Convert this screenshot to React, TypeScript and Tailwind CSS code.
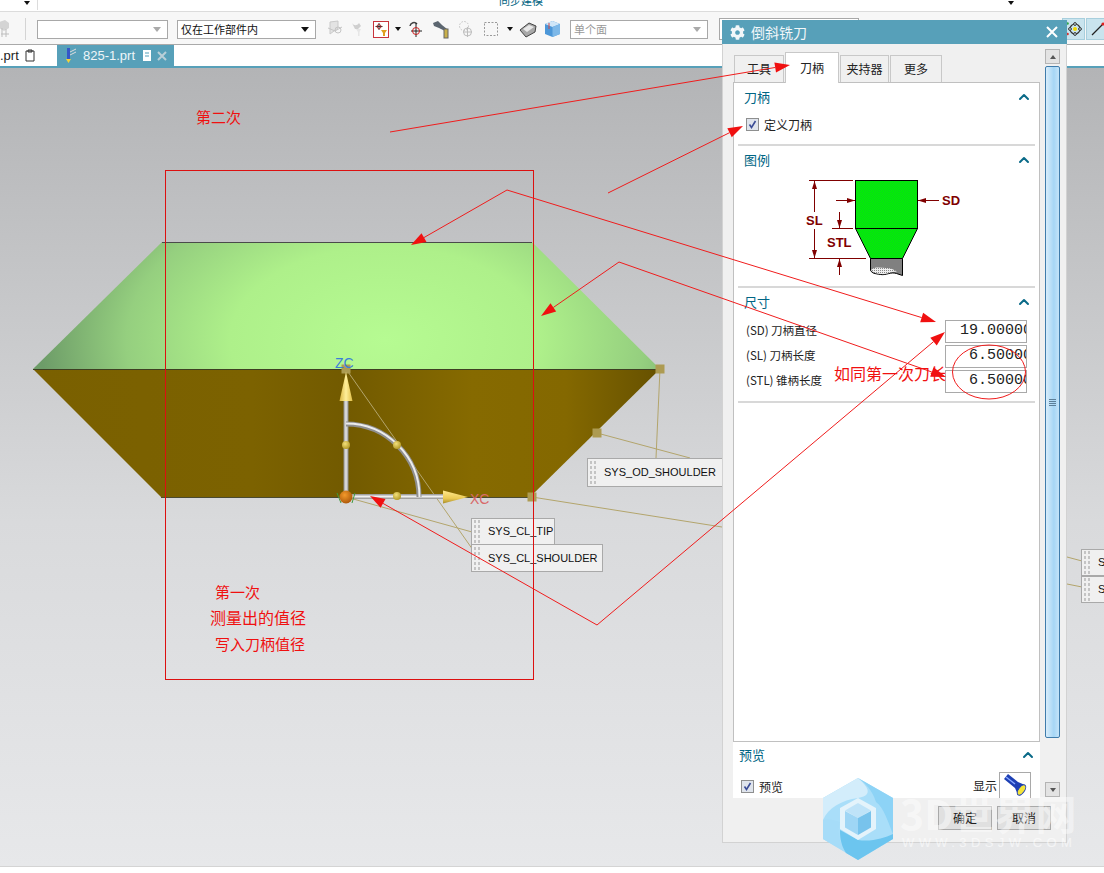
import { ChevronUp } from "lucide-react";
import { FaCog } from "react-icons/fa";

const sans = "font-['Liberation_Sans','Noto_Sans_CJK_SC',sans-serif]";
const cjk = "font-['Noto_Sans_CJK_SC','Noto_Sans',sans-serif]";

function Arrow({ x1, y1, x2, y2 }: { x1: number; y1: number; x2: number; y2: number }) {
    const a = Math.atan2(y2 - y1, x2 - x1);
    const len = 15;
    const w = 5;
    const bx = x2 - Math.cos(a) * len;
    const by = y2 - Math.sin(a) * len;
    const nx = -Math.sin(a) * w;
    const ny = Math.cos(a) * w;
    return (
        <g>
            <line x1={x1} y1={y1} x2={bx} y2={by} stroke="#f01c1c" strokeWidth="1" />
            <polygon points={`${x2},${y2} ${bx + nx},${by + ny} ${bx - nx},${by - ny}`} fill="#f01010" />
        </g>
    );
}

function Handle({ x, y }: { x: number; y: number }) {
    return <rect x={x - 4.5} y={y - 4.5} width="9" height="9" fill="#ad9b52" />;
}

function Model() {
    return (
        <svg className="absolute left-0 top-0" width="1104" height="873" viewBox="0 0 1104 873">
            <defs>
                <radialGradient id="green" gradientUnits="userSpaceOnUse" cx="385" cy="340" r="345" gradientTransform="translate(385 340) scale(1 .6) translate(-385 -340)">
                    <stop offset="0" stopColor="#b6fb92" />
                    <stop offset="0.45" stopColor="#aef08a" />
                    <stop offset="0.75" stopColor="#95cf7f" />
                    <stop offset="1" stopColor="#6d9c68" />
                </radialGradient>
                <linearGradient id="brown" gradientUnits="userSpaceOnUse" x1="33" y1="0" x2="660" y2="0">
                    <stop offset="0" stopColor="#7a6000" />
                    <stop offset="0.35" stopColor="#7c6200" />
                    <stop offset="0.5" stopColor="#725a00" />
                    <stop offset="0.7" stopColor="#866a00" />
                    <stop offset="0.85" stopColor="#846800" />
                    <stop offset="1" stopColor="#665100" />
                </linearGradient>
                <linearGradient id="shaft" x1="0" y1="0" x2="1" y2="0">
                    <stop offset="0" stopColor="#8e8e8e" />
                    <stop offset="0.5" stopColor="#e8e8e8" />
                    <stop offset="1" stopColor="#8e8e8e" />
                </linearGradient>
                <linearGradient id="shaftH" x1="0" y1="0" x2="0" y2="1">
                    <stop offset="0" stopColor="#8e8e8e" />
                    <stop offset="0.5" stopColor="#f0f0f0" />
                    <stop offset="1" stopColor="#8e8e8e" />
                </linearGradient>
                <linearGradient id="coneV" x1="0" y1="0" x2="1" y2="0">
                    <stop offset="0" stopColor="#d9b640" />
                    <stop offset="0.5" stopColor="#ffef9a" />
                    <stop offset="1" stopColor="#e0bd45" />
                </linearGradient>
                <linearGradient id="coneH" x1="0" y1="0" x2="0" y2="1">
                    <stop offset="0" stopColor="#ffe98e" />
                    <stop offset="0.6" stopColor="#eccb54" />
                    <stop offset="1" stopColor="#a88d2c" />
                </linearGradient>
                <radialGradient id="ball" cx="0.4" cy="0.35" r="0.7">
                    <stop offset="0" stopColor="#f3e07a" />
                    <stop offset="1" stopColor="#b09622" />
                </radialGradient>
                <radialGradient id="orange" cx="0.4" cy="0.35" r="0.7">
                    <stop offset="0" stopColor="#f49a2a" />
                    <stop offset="1" stopColor="#a95508" />
                </radialGradient>
            </defs>

            <polygon points="33,369 162,242 532,242 660,369" fill="url(#green)" />
            <polygon points="33,369 660,369 530,497 161,497" fill="url(#brown)" />
            <line x1="162" y1="242.5" x2="532" y2="242.5" stroke="#4a4a4a" />
            <line x1="33" y1="369.5" x2="660" y2="369.5" stroke="#3f3f22" />
            <line x1="161" y1="497.5" x2="530" y2="497.5" stroke="#4a4a30" />

            <g stroke="#b3a56c" strokeWidth="1" fill="none">
                <line x1="346" y1="369" x2="473" y2="550" />
                <line x1="346" y1="497" x2="472" y2="532" />
                <line x1="660" y1="369" x2="656" y2="458" />
                <line x1="597" y1="433" x2="690" y2="458" />
                <line x1="532" y1="497" x2="722" y2="527" />
                <line x1="1067" y1="557" x2="1082" y2="561" />
                <line x1="1067" y1="584" x2="1082" y2="587" />
            </g>
            <Handle x={346} y={369} />
            <Handle x={660} y={369} />
            <Handle x={597} y={433} />
            <Handle x={532} y={497} />

            <rect x="343.5" y="400" width="5" height="97" fill="url(#shaft)" />
            <rect x="346" y="494" width="100" height="5" fill="url(#shaftH)" />
            <polygon points="346,372 339.5,401 352.5,401" fill="url(#coneV)" />
            <polygon points="468,497 443,490.5 443,503.5" fill="url(#coneH)" />
            <path d="M346 424 A73 73 0 0 1 419 497" fill="none" stroke="#8f8f8f" strokeWidth="5" />
            <path d="M346 423.5 A73.5 73.5 0 0 1 419.5 497" fill="none" stroke="#ececec" strokeWidth="2" />
            <circle cx="346" cy="445" r="4" fill="url(#ball)" />
            <circle cx="397" cy="445" r="4" fill="url(#ball)" />
            <circle cx="397" cy="496" r="4" fill="url(#ball)" />
            <path d="M337 493 l4 10 M355 493 l-3 10" stroke="#3f9a3f" strokeWidth="1" fill="none" />
            <circle cx="346" cy="497" r="6.5" fill="url(#orange)" />
        </svg>
    );
}

// red notes drawn by hand on top of the screenshot
function Annotations() {
    return (
        <svg className="absolute left-0 top-0 pointer-events-none" width="1104" height="873" viewBox="0 0 1104 873">
            <rect x="165.5" y="170.5" width="368" height="509" fill="none" stroke="#dc1010" strokeWidth="1" />
            <Arrow x1={390} y1={132} x2={790} y2={65} />
            <Arrow x1={608} y1={193} x2={743} y2={126} />
            <Arrow x1={507} y1={190} x2={411} y2={245} />
            <Arrow x1={507} y1={190} x2={936} y2={322} />
            <Arrow x1={619} y1={262} x2={541} y2={316} />
            <Arrow x1={619} y1={262} x2={946} y2={377} />
            <Arrow x1={597} y1={625} x2={945} y2={332} />
            <Arrow x1={597} y1={625} x2={370} y2={496} />
            <ellipse cx="989" cy="372" rx="36.5" ry="27" fill="none" stroke="#f01c1c" strokeWidth="1" />
        </svg>
    );
}

function Grip() {
    return <div className="w-[8px] h-[25px] ml-[1px] mr-[7px] shrink-0 bg-[radial-gradient(#c4c4c4_1.3px,transparent_1.4px)] bg-[length:4px_5px]" />;
}

function SysLabel({ text, className }: { text: string; className: string }) {
    return (
        <div className={`absolute flex items-center bg-[#f0f0f0] border border-[#a9a9a9] text-[11px] text-[#111] ${sans} ${className}`}>
            <Grip />
            <span className="whitespace-nowrap">{text}</span>
        </div>
    );
}

function ToolIcon({ kind }: { kind: string }) {
    if (kind === "filter") {
        return (
            <svg width="16" height="17" viewBox="0 0 16 17">
                <rect x="0.5" y="0.5" width="15" height="16" fill="#fff" stroke="#c8343c" />
                <path d="M6 2v7M2.5 5.500h7" stroke="#333" />
                <circle cx="6" cy="5.500" r="2" fill="none" stroke="#b03030" />
                <path d="M8 9h6l-2 3v3h-2v-3z" fill="#e0a020" />
            </svg>
        );
    }
    if (kind === "snap") {
        return (
            <svg width="16" height="19" viewBox="0 0 16 19">
                <path d="M2 6 A4 4 0 0 1 9 4" fill="none" stroke="#444" strokeWidth="1.5" />
                <path d="M8 3v14M3 11h11" stroke="#222" />
                <circle cx="8" cy="11" r="3.5" fill="none" stroke="#cc2222" />
            </svg>
        );
    }
    if (kind === "wrench") {
        return (
            <svg width="18" height="19" viewBox="0 0 18 19">
                <path d="M1 3l5-2 4 4 5 4-2 2-6-3-5-2z" fill="#5c6670" />
                <rect x="12" y="9" width="4" height="9" fill="#c9b04a" stroke="#666" />
            </svg>
        );
    }
    if (kind === "dim1") {
        return (
            <svg width="16" height="20" viewBox="0 0 16 20">
                <path d="M3 3l8-1v7l-8 6z" fill="#e3e3e3" stroke="#c9c9c9" />
                <path d="M1 9l7 3 7-4" stroke="#c5c5c5" fill="none" />
                <circle cx="11" cy="11" r="3" fill="none" stroke="#c5c5c5" />
            </svg>
        );
    }
    if (kind === "dim2") {
        return (
            <svg width="16" height="18" viewBox="0 0 16 18">
                <path d="M2 3c2 3 5 3 7 0l2 3-3 3H5z" fill="#cfcfcf" />
                <path d="M6 9h5l-1.500 3v4H8v-4z" fill="#e6e6e6" />
            </svg>
        );
    }
    if (kind === "dim3") {
        return (
            <svg width="16" height="19" viewBox="0 0 16 19">
                <circle cx="6" cy="6" r="4.500" fill="none" stroke="#c2c2c2" strokeDasharray="1.5 1.5" />
                <circle cx="9.500" cy="12" r="4" fill="none" stroke="#bdbdbd" />
                <path d="M9.500 7v10M5 12h9" stroke="#bdbdbd" />
            </svg>
        );
    }
    if (kind === "select") {
        return (
            <svg width="16" height="16" viewBox="0 0 16 16">
                <rect x="1.500" y="1.500" width="13" height="13" fill="none" stroke="#999" strokeDasharray="2 1.5" />
            </svg>
        );
    }
    if (kind === "book") {
        return (
            <svg width="18" height="17" viewBox="0 0 18 17">
                <path d="M1 9l9-7 7 3-1 6-9 5z" fill="#a8a8a8" stroke="#444" />
                <path d="M4 8l6-4 5 2-7 5z" fill="#e8e8e8" />
            </svg>
        );
    }
    if (kind === "cube") {
        return (
            <svg width="17" height="18" viewBox="0 0 17 18">
                <path d="M1 4l7.500-3L16 4v10l-7.500 3L1 14z" fill="#4c97d8" />
                <path d="M1 4l7.500 3L16 4l-7.500-3z" fill="#cfe6f8" />
                <path d="M8.500 7v10L16 14V4z" fill="#7db8e8" />
                <path d="M5 3v6" stroke="#d04848" />
            </svg>
        );
    }
    return (
        <svg width="13" height="20" viewBox="0 0 13 20">
            <path d="M1 3l6-2 4 3v5l-5 3-5-3z" fill="#d4d4d4" />
            <path d="M4 9v9M8 10v8M3 15h8" stroke="#bdbdbd" />
        </svg>
    );
}

function Caret({ className = "" }: { className?: string }) {
    return <span className={`w-0 h-0 border-x-[3px] border-x-transparent border-t-[4px] border-t-[#111] ${className}`} />;
}

function Combo({ text, width, disabled }: { text?: string; width: string; disabled?: boolean }) {
    return (
        <div className={`flex items-center h-[19px] shrink-0 border border-[#a8a8a8] bg-white px-[3px] text-[11px] ${cjk} ${width} ${disabled ? "text-[#999]" : "text-[#111]"}`}>
            <span className="flex-1 whitespace-nowrap">{text}</span>
            <span className={`w-0 h-0 mr-[3px] border-x-[4px] border-x-transparent border-t-[5px] ${text && !disabled ? "border-t-[#111]" : "border-t-[#aaa]"}`} />
        </div>
    );
}

function Toolbar() {
    return (
        <div className="relative flex items-center h-[33px] shrink-0 bg-[#f7f7f7] border-b border-[#a9a9a9] pt-[4px] pb-[2px]">
            <div className="ml-[-2px] w-[14px] shrink-0">
                <ToolIcon kind="grip" />
            </div>
            <div className="w-px h-[22px] bg-[#d4d4d4] ml-[13px] mr-[11px] shrink-0" />
            <Combo width="w-[131px]" />
            <div className="w-[9px] shrink-0" />
            <Combo width="w-[139px]" text="仅在工作部件内" />
            <div className="flex items-center shrink-0 ml-[11px]">
                <ToolIcon kind="dim1" />
                <div className="ml-[7px] flex"><ToolIcon kind="dim2" /></div>
                <div className="ml-[7px] flex"><ToolIcon kind="filter" /></div>
                <Caret className="ml-[6px]" />
                <div className="ml-[7px] flex"><ToolIcon kind="snap" /></div>
                <div className="ml-[8px] flex"><ToolIcon kind="wrench" /></div>
                <div className="ml-[8px] flex"><ToolIcon kind="dim3" /></div>
                <div className="ml-[9px] flex"><ToolIcon kind="select" /></div>
                <Caret className="ml-[8px]" />
                <div className="ml-[6px] flex"><ToolIcon kind="book" /></div>
                <div className="ml-[7px] flex"><ToolIcon kind="cube" /></div>
            </div>
            <div className="w-[9px] shrink-0" />
            <Combo width="w-[138px]" text="单个面" disabled />
            <div className="w-[140px] h-[22px] ml-[11px] shrink-0 border border-[#a8a8a8] bg-white" />
            <div className="flex-1" />
            <div className="flex items-center shrink-0 h-[22px] gap-px mr-[-5px]">
                <div className="flex items-center justify-center w-[23px] h-[22px] bg-[#c9e4ee] border border-[#a8cfdd]">
                    <svg className="ml-[3px]" width="18" height="18" viewBox="0 0 18 18">
                        <circle cx="9" cy="9" r="5" fill="none" stroke="#333" strokeWidth="1.2" />
                        <circle cx="9" cy="9" r="2" fill="#f2d800" />
                        <circle cx="9" cy="4" r="1.400" fill="#c9e4ee" stroke="#333" />
                        <circle cx="9" cy="14" r="1.400" fill="#c9e4ee" stroke="#333" />
                        <circle cx="4" cy="9" r="1.400" fill="#c9e4ee" stroke="#333" />
                        <circle cx="14" cy="9" r="1.400" fill="#c9e4ee" stroke="#333" />
                        <circle cx="1.500" cy="3.500" r="1.300" fill="#2fa84a" />
                        <circle cx="1.500" cy="14" r="1.300" fill="#d83030" />
                    </svg>
                </div>
                <div className="flex items-center justify-center w-[23px] h-[22px] bg-[#c9e4ee] border border-[#a8cfdd]">
                    <svg width="16" height="16" viewBox="0 0 16 16">
                        <line x1="2" y1="14" x2="13" y2="3" stroke="#222" strokeWidth="1.2" />
                        <circle cx="13" cy="3" r="1.600" fill="#e02020" />
                    </svg>
                </div>
            </div>
        </div>
    );
}

function TabBar() {
    return (
        <div className="flex h-[21px] shrink-0 bg-white">
            <div className={`flex items-center w-[57px] text-[13px] text-[#222] ${sans} overflow-hidden`}>
                <span>.prt</span>
                <svg className="ml-[6px]" width="10" height="13" viewBox="0 0 10 13">
                    <path d="M1 2h8v10H1zM3 1h4v2H3z" fill="#fff" stroke="#333" />
                </svg>
            </div>
            <div className={`flex items-center w-[117px] bg-[#57a0b9] text-[#eef5f8] text-[13px] ${sans}`}>
                <svg className="ml-[6px]" width="14" height="17" viewBox="0 0 14 17">
                    <path d="M4 1h3v11H4z" fill="#3456c8" />
                    <path d="M7 5l6-3M7 8l6-3" stroke="#ddd" />
                    <path d="M3 12h5l-2.500 4z" fill="#f2d23a" />
                </svg>
                <span className="ml-[6px]">825-1.prt</span>
                <svg className="ml-[7px]" width="10" height="13" viewBox="0 0 10 13">
                    <path d="M1 1h8v11H1z" fill="#fff" />
                    <path d="M3 4h4M3 7h4" stroke="#57a0b9" />
                </svg>
                <svg className="ml-[5px]" width="10" height="10" viewBox="0 0 10 10">
                    <path d="M1 1l8 8M9 1L1 9" stroke="#b9cfd8" strokeWidth="2" />
                </svg>
            </div>
        </div>
    );
}

function Checkbox() {
    return (
        <span className="flex items-center justify-center w-[13px] h-[13px] shrink-0 border border-[#8e8f8f] bg-[#dfe4ec]">
            <svg width="9" height="9" viewBox="0 0 9 9">
                <path d="M1.500 4.500l2 3L7.500 1" fill="none" stroke="#3a4c96" strokeWidth="1.6" />
            </svg>
        </span>
    );
}

function SectionHead({ title }: { title: string }) {
    return (
        <div className={`flex items-center justify-between text-[13px] text-[#006584] ${cjk}`}>
            <span>{title}</span>
            <ChevronUp size={16} strokeWidth={3} className="text-[#0a6a88]" />
        </div>
    );
}

function Legend() {
    const dark = "#800000";
    const label = "font-['Liberation_Sans',sans-serif] text-[13px] font-bold";
    return (
        <svg width="170" height="102" viewBox="0 0 170 102" className="block">
            <defs>
                <pattern id="dither" width="2" height="2" patternUnits="userSpaceOnUse">
                    <rect width="2" height="2" fill="#00f800" />
                    <rect width="1" height="1" fill="#0cd41c" />
                    <rect x="1" y="1" width="1" height="1" fill="#0cd41c" />
                </pattern>
                <pattern id="speck" width="2" height="2" patternUnits="userSpaceOnUse">
                    <rect width="2" height="2" fill="#eeeeee" />
                    <rect width="1" height="1" fill="#888888" />
                </pattern>
            </defs>
            <rect x="55.5" y="4.5" width="62" height="48" fill="url(#dither)" stroke="#000" />
            <polygon points="55.5,52.5 117.5,52.5 102.5,82.5 70.5,82.5" fill="url(#dither)" stroke="#000" />
            <path d="M70.500 82.500h32v17l-6-2c-6-2-10 2-16 1s-8-1-10-4z" fill="#808080" stroke="#000" />
            <path d="M71 94c4-4 10-2 15-2s9 2 11 4c-6-1-10 3-16 2s-8-1-10-4z" fill="url(#speck)" />
            <g stroke={dark} strokeWidth="1" fill="none">
                <path d="M9 4.500h44M14.500 5v31M14.500 53v29M9 82.500h57" />
                <path d="M36 24.500h19M118 24.500h21" />
                <path d="M32 52.500h21M39.500 36v16M39.500 83v16" />
            </g>
            <g fill={dark}>
                <path d="M14.500 5l-2.500 8h5zM14.500 82l-2.500-8h5z" />
                <path d="M55 24.500l-8-2.500v5zM118 24.500l8-2.500v5z" />
                <path d="M39.500 52l-2.500-8h5zM39.500 83l-2.500 8h5z" />
            </g>
            <text x="142" y="29" fill={dark} className={label}>SD</text>
            <text x="6" y="49" fill={dark} className={label}>SL</text>
            <text x="27" y="71" fill={dark} className={label}>STL</text>
        </svg>
    );
}

function Dim({ label, value }: { label: string; value: string }) {
    return (
        <div className="flex items-center h-[25px] justify-between px-[8px]">
            <span className={`text-[11.5px] text-[#222] whitespace-nowrap ${cjk}`}>{label}</span>
            <div className="flex items-center justify-end w-[82px] h-[23px] border border-[#a9a9a9] bg-white overflow-hidden">
                <span className="whitespace-nowrap font-['Liberation_Mono',monospace] text-[15px] text-[#222] mr-[-6px]">{value}</span>
            </div>
        </div>
    );
}

function Dialog() {
    const tab = `flex items-center justify-center h-[27px] bg-[#f0f0f0] border border-b-0 border-[#c8c8c8] text-[12px] text-[#222] ${cjk}`;
    return (
        <div className="absolute left-[722px] top-[20px] w-[345px] h-[823px] flex flex-col bg-[#f0f0f0] border-b border-x border-[#d2d2d2]">
            <div className={`flex items-center h-[24px] shrink-0 mx-[-1px] bg-[#57a0b9] text-[#f2f7f9] text-[14px] ${cjk}`}>
                <FaCog size={15} className="ml-[8px] mr-[6px]" />
                <span className="flex-1">倒斜铣刀</span>
                <svg className="mr-[9px]" width="12" height="12" viewBox="0 0 12 12">
                    <path d="M1 1l10 10M11 1L1 11" stroke="#fff" strokeWidth="2" />
                </svg>
            </div>
            <div className="flex flex-1 min-h-0 pl-[10px] pr-[6px]">
                <div className="flex flex-col w-[307px] shrink-0">
                    <div className="relative flex items-end h-[38px] shrink-0 gap-px pl-px">
                        <div className={`${tab} w-[50px]`}>工具</div>
                        <div className={`flex items-center justify-center h-[31px] w-[54px] bg-white border border-b-0 border-[#c8c8c8] text-[12px] text-[#222] mb-[-1px] ${cjk}`}>刀柄</div>
                        <div className={`${tab} w-[49px]`}>夹持器</div>
                        <div className={`${tab} w-[52px]`}>更多</div>
                    </div>
                    <div className="flex flex-col h-[660px] shrink-0 bg-white border border-[#c0c0c0] px-[4px]">
                        <div className="h-[63px] shrink-0 border-b-2 border-[#d8d8d8] pt-[4px]">
                            <div className="pl-[6px] pr-[3px]"><SectionHead title="刀柄" /></div>
                            <div className={`flex items-center gap-[5px] pl-[8px] mt-[9px] text-[12px] text-[#222] ${cjk}`}>
                                <Checkbox />
                                <span>定义刀柄</span>
                            </div>
                        </div>
                        <div className="h-[142px] shrink-0 border-b-2 border-[#d8d8d8] pt-[4px]">
                            <div className="pl-[6px] pr-[3px]"><SectionHead title="图例" /></div>
                            <div className="pl-[62px] mt-[6px]"><Legend /></div>
                        </div>
                        <div className="h-[115px] shrink-0 border-b-2 border-[#d8d8d8] pt-[4px]">
                            <div className="pl-[6px] pr-[3px] mb-[7px]"><SectionHead title="尺寸" /></div>
                            <Dim label="(SD) 刀柄直径" value="19.00000" />
                            <Dim label="(SL) 刀柄长度" value="6.50000" />
                            <Dim label="(STL) 锥柄长度" value="6.50000" />
                        </div>
                    </div>
                    <div className="flex flex-col h-[56px] shrink-0 bg-white pl-[6px] pr-[4px] pt-[3px]">
                        <SectionHead title="预览" />
                        <div className={`flex items-end justify-between mt-[7px] text-[12px] text-[#222] ${cjk}`}>
                            <div className="flex items-center gap-[5px] pl-[2px] pb-[2px]">
                                <Checkbox />
                                <span>预览</span>
                            </div>
                            <div className="flex items-center gap-[2px] pr-[5px]">
                                <span className="pt-[3px]">显示</span>
                                <span className="flex items-center justify-center w-[32px] h-[26px] border border-[#a9a9a9] border-b-0 bg-white">
                                    <svg width="26" height="24" viewBox="0 0 26 24">
                                        <path d="M2 6l4-5 10 8 7 3-7 10-3-7z" fill="#1d3fb4" />
                                        <path d="M4 4l9 7" stroke="#86a6ff" strokeWidth="1.5" />
                                        <ellipse cx="19.500" cy="17" rx="3" ry="6" transform="rotate(35 19.500 17)" fill="#f4e43a" stroke="#1d3fb4" />
                                    </svg>
                                </span>
                            </div>
                        </div>
                    </div>
                    <div className="flex justify-end gap-[5px] mt-[8px] mr-[-11px]">
                        <button className={`w-[54px] h-[24px] bg-[#e0e0e0] border border-[#a9a9a9] text-[12px] text-[#222] ${cjk}`}>确定</button>
                        <button className={`w-[54px] h-[24px] bg-[#e0e0e0] border border-[#a9a9a9] text-[12px] text-[#222] ${cjk}`}>取消</button>
                    </div>
                </div>
                <div className="flex flex-col items-center w-[16px] ml-[5px] mt-[5px] h-[748px]">
                    <div className="flex items-center justify-center w-[15px] h-[15px] shrink-0 bg-[#e3e3e3] border border-[#b4b4b4]">
                        <span className="w-0 h-0 border-x-[3px] border-x-transparent border-b-[4px] border-b-[#555]" />
                    </div>
                    <div className="flex items-center justify-center w-[15px] h-[672px] mt-[2px] shrink-0 rounded-[2px] border border-[#3f7cab] bg-[linear-gradient(90deg,#d8edfb,#a6d6f5_60%,#c4e4f9)]">
                        <div className="w-[7px] h-[7px] border-y-[3px] border-[#5c7f99] border-double" />
                    </div>
                    <div className="flex-1" />
                    <div className="flex items-center justify-center w-[15px] h-[15px] shrink-0 bg-[#e3e3e3] border border-[#b4b4b4]">
                        <span className="w-0 h-0 border-x-[3px] border-x-transparent border-t-[4px] border-t-[#555]" />
                    </div>
                </div>
            </div>
        </div>
    );
}

function Watermark() {
    return (
        <div className="absolute left-[822px] top-[778px] w-[270px] h-[84px] pointer-events-none">
            <svg className="absolute left-0 top-0" width="72" height="82" viewBox="0 0 72 82">
                <polygon points="36,0 71,20 71,61 36,82 1,61 1,20" fill="#a9def9" />
                <path d="M36 0 L1 20 L1 42 C6 30 20 22 36 20 C48 18 50 12 36 0z" fill="#d3edfb" />
                <path d="M36 0 L71 20 L71 56 C66 44 62 30 54 24 C50 12 44 6 36 0z" fill="#8dd3f6" />
                <path d="M1 42 L1 61 L30 78 C18 70 14 56 18 44 C12 42 6 40 1 42z" fill="#a6dcf8" />
                <path d="M36 82 L24 75 C18 66 18 56 18 52 L36 62 C50 64 62 60 71 56 L71 61z" fill="#6cc5ef" />
                <polygon points="36,20 54,30 54,51 36,62 18,51 18,30" fill="#e4f3fb" />
                <polygon points="36,25 49,32.5 36,40 23,32.5" fill="#bfe3f8" />
                <polygon points="23,33 36,40 36,57 23,49.5" fill="#9fd6f5" />
                <polygon points="49,33 36,40 36,57 49,49.5" fill="#78c3ec" />
            </svg>
            <div className={`absolute left-[78px] top-[12px] text-[41px] leading-[44px] font-bold text-white/45 whitespace-nowrap ${cjk}`}>3D世界网</div>
            <div className={`absolute left-[80px] top-[58px] text-[13px] leading-[14px] tracking-[4.4px] text-white/55 whitespace-nowrap ${sans}`}>WWW.3DSJW.COM</div>
        </div>
    );
}

function Note({ text, className }: { text: string; className: string }) {
    return <span className={`absolute whitespace-nowrap text-[#f01010] ${cjk} ${className}`}>{text}</span>;
}

export default function App() {
    return (
        <div className="relative w-[1104px] h-[873px] overflow-hidden flex flex-col bg-white">
            <div className="relative h-[12px] shrink-0 bg-white border-b border-[#dcdcdc] overflow-hidden">
                <Caret className="absolute left-[24px] top-[1px]" />
                <div className="absolute left-[37px] top-0 h-[10px] w-px bg-[#dcdcdc]" />
                <span className={`absolute left-[499px] top-[-8px] text-[11px] text-[#00637f] ${cjk}`}>同步建模</span>
                <Caret className="absolute left-[1008px] top-[1px]" />
            </div>
            <Toolbar />
            <TabBar />
            <div className="h-[2px] shrink-0 bg-[#57a0b9]" />
            <div className="flex-1 bg-[linear-gradient(180deg,#b3b4b6_0%,#d9dadc_57%,#e7e8ea_100%)]" />
            <div className="h-[7px] shrink-0 bg-white border-t border-[#d4d4d4]" />

            <Model />
            <SysLabel text="SYS_OD_SHOULDER" className="left-[587px] top-[458px] w-[140px] h-[29px]" />
            <SysLabel text="SYS_CL_TIP" className="left-[471px] top-[518px] w-[84px] h-[27px]" />
            <SysLabel text="SYS_CL_SHOULDER" className="left-[471px] top-[544px] w-[132px] h-[28px]" />
            <SysLabel text="SYS_CL_TIP" className="left-[1081px] top-[549px] w-[84px] h-[27px]" />
            <SysLabel text="SYS_CL_SHOULDER" className="left-[1081px] top-[576px] w-[132px] h-[27px]" />
            <span className={`absolute left-[335px] top-[353px] text-[14px] text-[#3b7fd8] ${sans}`}>ZC</span>
            <span className={`absolute left-[470px] top-[489px] text-[14px] text-[#d86a6a] ${sans}`}>XC</span>
            <Note text="第二次" className="left-[196px] top-[106px] text-[15px]" />
            <Note text="第一次" className="left-[215px] top-[581px] text-[15px]" />
            <Note text="测量出的值径" className="left-[210px] top-[605px] text-[16px]" />
            <Note text="写入刀柄值径" className="left-[215px] top-[633px] text-[15px]" />

            <Dialog />
            <Annotations />
            <Note text="如同第一次刀长" className="left-[834px] top-[361px] text-[16px]" />
            <Watermark />
        </div>
    );
}
